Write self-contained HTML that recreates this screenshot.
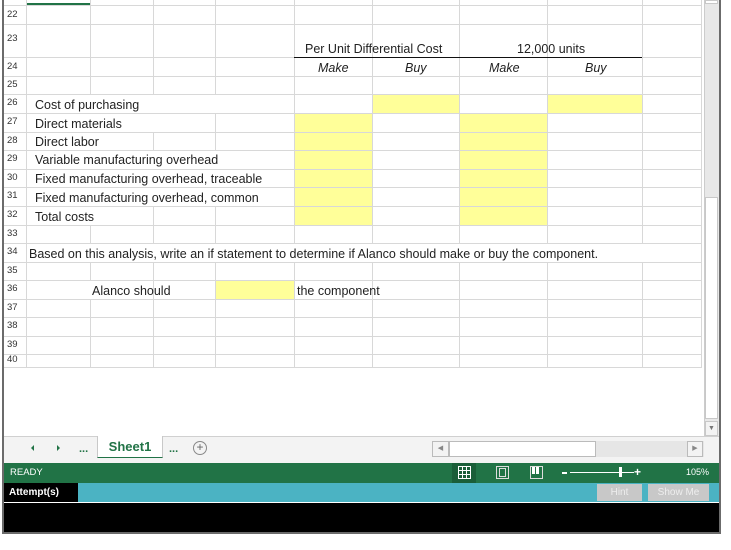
<!DOCTYPE html>
<html><head><meta charset="utf-8">
<style>
*{margin:0;padding:0;box-sizing:border-box}
body{width:731px;height:550px;background:#fff;position:relative;overflow:hidden;font-family:"Liberation Sans",sans-serif}
.a{position:absolute}
.h{position:absolute;height:1px;background:#d8d8d8}
.v{position:absolute;width:1px;background:#d8d8d8}
.y{position:absolute;background:#ffff99}
.t{position:absolute;font-size:12.5px;color:#222;white-space:nowrap;line-height:14px}
.n{position:absolute;left:7px;font-size:9.5px;color:#333;line-height:10px}
.i{font-style:italic}
</style></head><body>
<div class="a" style="left:2px;top:0;width:2px;height:534px;background:#6b6b6b"></div>
<div class="a" style="left:719px;top:0;width:2px;height:534px;background:#6b6b6b"></div>
<div class="a" style="left:2px;top:532px;width:719px;height:2px;background:#6b6b6b"></div>
<div class="a" style="left:26px;top:3px;width:64px;height:2px;background:#217346"></div>

<div class="y" style="left:372px;top:94px;width:87px;height:19px"></div>
<div class="y" style="left:547px;top:94px;width:95px;height:19px"></div>
<div class="y" style="left:294px;top:113px;width:78px;height:112px"></div>
<div class="y" style="left:459px;top:113px;width:88px;height:112px"></div>
<div class="y" style="left:215px;top:280px;width:79px;height:19px"></div>

<div class="h" style="left:4px;top:5px;width:697px"></div>
<div class="h" style="left:4px;top:24px;width:697px"></div>
<div class="h" style="left:4px;top:57px;width:697px"></div>
<div class="h" style="left:4px;top:76px;width:697px"></div>
<div class="h" style="left:4px;top:94px;width:697px"></div>
<div class="h" style="left:4px;top:113px;width:697px"></div>
<div class="h" style="left:4px;top:132px;width:697px"></div>
<div class="h" style="left:4px;top:150px;width:697px"></div>
<div class="h" style="left:4px;top:169px;width:697px"></div>
<div class="h" style="left:4px;top:187px;width:697px"></div>
<div class="h" style="left:4px;top:206px;width:697px"></div>
<div class="h" style="left:4px;top:225px;width:697px"></div>
<div class="h" style="left:4px;top:243px;width:697px"></div>
<div class="h" style="left:4px;top:262px;width:697px"></div>
<div class="h" style="left:4px;top:280px;width:697px"></div>
<div class="h" style="left:4px;top:299px;width:697px"></div>
<div class="h" style="left:4px;top:317px;width:697px"></div>
<div class="h" style="left:4px;top:336px;width:697px"></div>
<div class="h" style="left:4px;top:354px;width:697px"></div>
<div class="h" style="left:4px;top:367px;width:697px"></div>
<div class="v" style="left:26px;top:0;height:368px"></div>
<div class="v" style="left:90px;top:0;height:94px"></div>
<div class="v" style="left:90px;top:225px;height:18px"></div>
<div class="v" style="left:90px;top:262px;height:18px"></div>
<div class="v" style="left:90px;top:299px;height:69px"></div>
<div class="v" style="left:153px;top:0;height:94px"></div><div class="v" style="left:153px;top:132px;height:19px"></div><div class="v" style="left:153px;top:206px;height:37px"></div><div class="v" style="left:153px;top:262px;height:106px"></div>
<div class="v" style="left:215px;top:0;height:94px"></div><div class="v" style="left:215px;top:113px;height:37px"></div><div class="v" style="left:215px;top:206px;height:37px"></div><div class="v" style="left:215px;top:262px;height:106px"></div>
<div class="v" style="left:294px;top:0;height:243px"></div><div class="v" style="left:294px;top:262px;height:106px"></div>
<div class="v" style="left:372px;top:0;height:243px"></div><div class="v" style="left:372px;top:262px;height:106px"></div>
<div class="v" style="left:459px;top:0;height:243px"></div><div class="v" style="left:459px;top:262px;height:106px"></div>
<div class="v" style="left:547px;top:0;height:243px"></div><div class="v" style="left:547px;top:262px;height:106px"></div>
<div class="v" style="left:642px;top:0;height:243px"></div><div class="v" style="left:642px;top:262px;height:106px"></div>
<div class="v" style="left:701px;top:0;height:368px"></div>

<div class="a" style="left:294px;top:57px;width:348px;height:1px;background:#111"></div>

<div class="n" style="top:10px">22</div>
<div class="n" style="top:34px">23</div>
<div class="n" style="top:62px">24</div>
<div class="n" style="top:80px">25</div>
<div class="n" style="top:98px">26</div>
<div class="n" style="top:117px">27</div>
<div class="n" style="top:136px">28</div>
<div class="n" style="top:154px">29</div>
<div class="n" style="top:173px">30</div>
<div class="n" style="top:191px">31</div>
<div class="n" style="top:210px">32</div>
<div class="n" style="top:229px">33</div>
<div class="n" style="top:247px">34</div>
<div class="n" style="top:266px">35</div>
<div class="n" style="top:284px">36</div>
<div class="n" style="top:303px">37</div>
<div class="n" style="top:321px">38</div>
<div class="n" style="top:340px">39</div>
<div class="n" style="top:355px">40</div>

<div class="t" style="left:305px;top:42px">Per Unit Differential Cost</div>
<div class="t" style="left:517px;top:42px">12,000 units</div>
<div class="t i" style="left:318px;top:61px">Make</div>
<div class="t i" style="left:405px;top:61px">Buy</div>
<div class="t i" style="left:489px;top:61px">Make</div>
<div class="t i" style="left:585px;top:61px">Buy</div>
<div class="t" style="left:35px;top:98px">Cost of purchasing</div>
<div class="t" style="left:35px;top:117px">Direct materials</div>
<div class="t" style="left:35px;top:135px">Direct labor</div>
<div class="t" style="left:35px;top:153px">Variable manufacturing overhead</div>
<div class="t" style="left:35px;top:172px">Fixed manufacturing overhead, traceable</div>
<div class="t" style="left:35px;top:191px">Fixed manufacturing overhead, common</div>
<div class="t" style="left:35px;top:210px">Total costs</div>
<div class="t" style="left:29px;top:247px">Based on this analysis, write an if statement to determine if Alanco should make or buy the component.</div>
<div class="t" style="left:92px;top:284px">Alanco should</div>
<div class="t" style="left:297px;top:284px">the component</div>

<div class="a" style="left:704px;top:0;width:15px;height:436px;background:#e8e8e8;border-left:1px solid #ccc"></div>
<div class="a" style="left:705px;top:197px;width:13px;height:222px;background:#fff;border:1px solid #c8c8c8"></div>
<div class="a" style="left:705px;top:421px;width:13px;height:15px;background:#f3f3f3;border:1px solid #c8c8c8;font-size:7px;color:#777;text-align:center;line-height:13px">▼</div>
<div class="a" style="left:705px;top:0;width:13px;height:4px;background:#fff;border:1px solid #c8c8c8"></div>

<div class="a" style="left:4px;top:436px;width:715px;height:27px;background:#f3f3f3;border-top:1px solid #d0d0d0"></div>
<svg class="a" style="left:30px;top:444px" width="6" height="8"><path d="M4 1L1 4L4 7Z" fill="#217346"/></svg>
<svg class="a" style="left:56px;top:444px" width="6" height="8"><path d="M1 1L4 4L1 7Z" fill="#217346"/></svg>
<div class="a" style="left:79px;top:443px;font-size:11px;color:#217346;font-weight:bold">...</div>
<div class="a" style="left:97px;top:436px;width:66px;height:22px;background:#fff;border-left:1px solid #c8c8c8;border-right:1px solid #c8c8c8;border-bottom:1px solid #217346;font-size:13px;font-weight:bold;color:#217346;text-align:center;line-height:22px">Sheet1</div>
<div class="a" style="left:169px;top:443px;font-size:11px;color:#217346;font-weight:bold">...</div>
<div class="a" style="left:193px;top:441px;width:14px;height:14px;border:1px solid #888;border-radius:50%;font-size:12px;line-height:11px;text-align:center;color:#666">+</div>

<div class="a" style="left:432px;top:441px;width:272px;height:16px;background:#e6e6e6"></div>
<div class="a" style="left:432px;top:441px;width:17px;height:16px;background:#f3f3f3;border:1px solid #bbb;font-size:7px;color:#888;text-align:center;line-height:14px">◀</div>
<div class="a" style="left:449px;top:441px;width:147px;height:16px;background:#fff;border:1px solid #bbb"></div>
<div class="a" style="left:687px;top:441px;width:16px;height:16px;background:#f3f3f3;border:1px solid #bbb;font-size:7px;color:#888;text-align:center;line-height:14px">▶</div>

<div class="a" style="left:4px;top:463px;width:715px;height:20px;background:#217346"></div>
<div class="a" style="left:10px;top:467px;font-size:9.5px;color:#fff">READY</div>
<div class="a" style="left:452px;top:463px;width:24px;height:20px;background:#1a5e38"></div>
<svg class="a" style="left:458px;top:466px" width="13" height="13"><rect x="0.5" y="0.5" width="12" height="12" fill="none" stroke="#fff"/><path d="M4.5 0v13M8.5 0v13M0 4.5h13M0 8.5h13" stroke="#fff"/></svg>
<svg class="a" style="left:496px;top:466px" width="13" height="13"><rect x="0.5" y="0.5" width="12" height="12" fill="none" stroke="#ddd"/><rect x="3.5" y="2.5" width="6" height="8" fill="none" stroke="#ddd"/></svg>
<svg class="a" style="left:530px;top:466px" width="13" height="13"><rect x="0.5" y="0.5" width="12" height="12" fill="none" stroke="#ddd"/><rect x="2" y="1" width="3" height="7" fill="#fff"/><rect x="6" y="1" width="3" height="7" fill="#fff"/></svg>
<div class="a" style="left:562px;top:472px;width:5px;height:2px;background:#fff"></div>
<div class="a" style="left:570px;top:472px;width:64px;height:1px;background:#fff"></div>
<div class="a" style="left:619px;top:467px;width:3px;height:10px;background:#fff"></div>
<div class="a" style="left:634px;top:466px;font-size:12px;color:#fff;font-weight:bold;line-height:12px">+</div>
<div class="a" style="left:686px;top:467px;font-size:9px;color:#fff">105%</div>

<div class="a" style="left:4px;top:483px;width:715px;height:19px;background:#4bb3c3"></div>
<div class="a" style="left:4px;top:483px;width:74px;height:19px;background:#000;color:#fff;font-size:10px;font-weight:bold;line-height:19px;padding-left:5px">Attempt(s)</div>
<div class="a" style="left:597px;top:484px;width:45px;height:17px;background:#c8c8c8;color:#eee;font-size:10px;text-align:center;line-height:17px">Hint</div>
<div class="a" style="left:648px;top:484px;width:61px;height:17px;background:#c8c8c8;color:#eee;font-size:10px;text-align:center;line-height:17px">Show Me</div>
<div class="a" style="left:4px;top:503px;width:715px;height:29px;background:#000"></div>
</body></html>
